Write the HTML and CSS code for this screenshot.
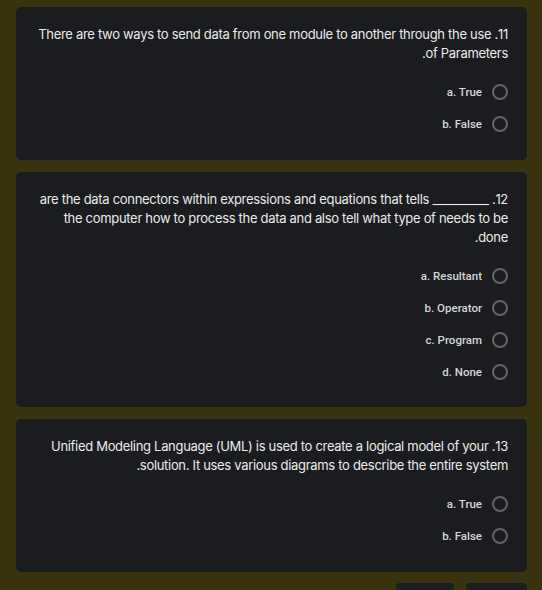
FILE: index.html
```html
<!DOCTYPE html>
<html lang="en">
<head>
<meta charset="utf-8">
<title>Quiz</title>
<link rel="stylesheet" href="styles.css">
</head>
<body>
<main class="page" dir="rtl">
  <section class="card">
    <p class="question">11. There are two ways to send data from one module to another through the use of Parameters.</p>
    <div class="options">
      <label class="option"><span class="radio"></span><span class="opt-text" dir="ltr">a. True</span></label>
      <label class="option"><span class="radio"></span><span class="opt-text" dir="ltr">b. False</span></label>
    </div>
  </section>
  <section class="card">
    <p class="question">12. __________ are the data connectors within expressions and equations that tells the computer how to process the data and also tell what type of needs to be done.</p>
    <div class="options">
      <label class="option"><span class="radio"></span><span class="opt-text" dir="ltr">a. Resultant</span></label>
      <label class="option"><span class="radio"></span><span class="opt-text" dir="ltr">b. Operator</span></label>
      <label class="option"><span class="radio"></span><span class="opt-text" dir="ltr">c. Program</span></label>
      <label class="option"><span class="radio"></span><span class="opt-text" dir="ltr">d. None</span></label>
    </div>
  </section>
  <section class="card">
    <p class="question">13. Unified Modeling Language (UML) is used to create a logical model of your solution. It uses various diagrams to describe the entire system.</p>
    <div class="options">
      <label class="option"><span class="radio"></span><span class="opt-text" dir="ltr">a. True</span></label>
      <label class="option"><span class="radio"></span><span class="opt-text" dir="ltr">b. False</span></label>
    </div>
  </section>
  <div class="actions">
    <button class="btn btn-next" type="button"></button>
    <button class="btn btn-prev" type="button"></button>
  </div>
</main>
</body>
</html>
```
FILE: styles.css
```css
html, body {
  margin: 0;
  padding: 0;
  background: #3a330f;
  height: 100%;
  overflow: hidden;
}
.page {
  padding: 7px 15px 0 16px;
  display: flex;
  flex-direction: column;
  gap: 12px;
  font-family: Inter, "Noto Sans", sans-serif;
}
.card {
  background: #1b1c1f;
  border-radius: 5px;
  padding: 18px 19px 19.5px 20px;
}
.question {
  margin: 0;
  font-size: 13px;
  line-height: 19px;
  color: #ebebeb;
  letter-spacing: -0.31px;
}
.options {
  margin-top: 13px;
  display: flex;
  flex-direction: column;
}
.option {
  height: 32px;
  display: flex;
  align-items: center;
  gap: 10px;
}
.radio {
  width: 12px;
  height: 12px;
  border: 2px solid #646464;
  border-radius: 50%;
  flex: none;
}
.opt-text {
  font-family: Roboto, "Liberation Sans", sans-serif;
  font-size: 11.5px;
  font-weight: 500;
  color: #d6d6d6;
}
.actions {
  display: flex;
  gap: 12px;
  margin-top: -1px;
}
.btn {
  height: 20px;
  border: none;
  background: #1c1e25;
  border-radius: 4px 4px 0 0;
  padding: 0;
}
.btn-next { width: 61px; }
.btn-prev { width: 58px; }
```
